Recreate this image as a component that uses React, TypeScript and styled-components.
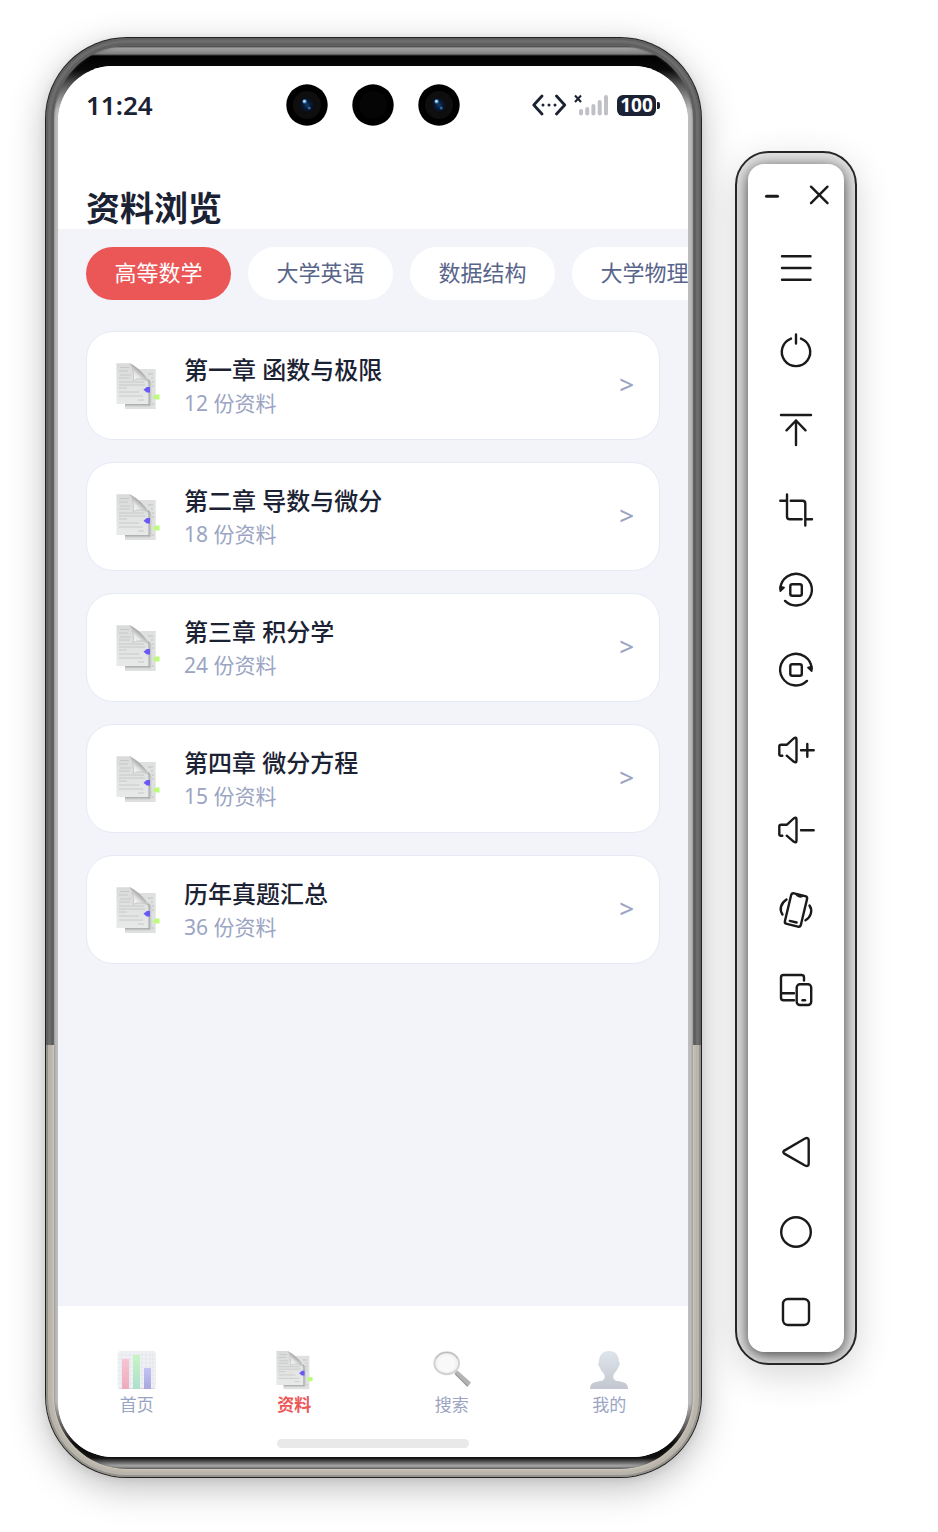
import React from "react";
import styled, { createGlobalStyle } from "styled-components";

const ink = "#1b2233";
const muted = "#9ba5c3";
const accent = "#eb5757";

const GlobalStyle = createGlobalStyle`
  *, *::before, *::after { box-sizing: border-box; }
  body {
    margin: 0;
    background: #fff;
    font-family: "Noto Sans", "Noto Sans CJK SC", sans-serif;
    color: ${ink};
  }
  button {
    font: inherit;
    color: inherit;
    border: 0;
    padding: 0;
    background: none;
    cursor: pointer;
  }
`;

const Desktop = styled.div`
  display: flex;
  align-items: flex-start;
  gap: 33px;
  min-height: 100vh;
  padding: 37px 81px 54px 45px;
`;

/* Phone shell */

const Shell = styled.div`
  flex: 1;
  min-width: 0;
  align-self: stretch;
  display: flex;
  padding: 1px;
  border-radius: 82px;
  background: #222;
  box-shadow: 0 10px 36px rgba(0, 0, 0, 0.26), 0 2px 8px rgba(0, 0, 0, 0.08);
`;

const Rail = styled.div`
  flex: 1;
  min-width: 0;
  display: flex;
  padding: 8px;
  border-radius: 81px;
  background: linear-gradient(#626262 0 70%, #cdc7ba 70%);
  box-shadow: inset 0 0 0 2px rgba(70, 70, 70, 0.3), inset 0 0 0 5px rgba(160, 160, 160, 0.2),
    inset 0 0 0 7px rgba(70, 70, 70, 0.1);
`;

const Bezel = styled.div`
  flex: 1;
  min-width: 0;
  display: flex;
  padding: 20px 5px 12px 4px;
  border-radius: 73px;
  background: linear-gradient(
    #3a3a3a 0,
    #a5a5a5 2px,
    #7d7d7d 8px,
    #000 10px,
    #0a0a0a 24px,
    #555 38px,
    #bdbdbd 64px,
    #bdbdbd calc(100% - 66px),
    #555 calc(100% - 40px),
    #0a0a0a calc(100% - 26px),
    #111 calc(100% - 11px),
    #aaa calc(100% - 3px),
    #666 100%
  );
  box-shadow: inset 0 0 3px rgba(70, 70, 70, 0.6);
`;

const Screen = styled.div`
  flex: 1;
  min-width: 0;
  display: flex;
  flex-direction: column;
  overflow: hidden;
  border-radius: 55px;
  background: #f3f4fa;
`;

const StatusBar = styled.div`
  display: grid;
  grid-template-columns: 1fr auto 1fr;
  align-items: center;
  height: 78px;
  padding: 0 28px;
  background: #fff;
`;

const Clock = styled.time`
  font-size: 26px;
  font-weight: 600;
  line-height: 34px;
`;

const Cameras = styled.div`
  display: flex;
  gap: 24px;
`;

const StatusIcons = styled.div`
  display: flex;
  justify-content: flex-end;
  align-items: center;
  gap: 9px;
`;

const Battery = styled.div`
  display: flex;
  align-items: center;
  gap: 1px;

  &::after {
    content: "";
    width: 3px;
    height: 7px;
    border-radius: 0 2px 2px 0;
    background: ${ink};
  }
`;

const BatteryLevel = styled.span`
  width: 39px;
  border-radius: 6px;
  background: ${ink};
  color: #fff;
  font-size: 19px;
  font-weight: 700;
  line-height: 21px;
  text-align: center;
`;

const Header = styled.header`
  padding: 44px 28px 1px;
  background: #fff;
`;

const Title = styled.h1`
  margin: 0;
  font-size: 34px;
  font-weight: 700;
  line-height: 40px;
`;

const Subjects = styled.div`
  display: flex;
  gap: 17px;
  padding: 18px 0 0 28px;
  overflow: hidden;
`;

const Chip = styled.button<{ $active?: boolean }>`
  flex: none;
  height: 53px;
  min-width: 145px;
  padding: 0 28px 4px;
  border-radius: 27px;
  background: ${(p) => (p.$active ? accent : "#fff")};
  color: ${(p) => (p.$active ? "#fff" : "#59648a")};
  font-size: 22px;
  line-height: 32px;
  white-space: nowrap;
`;

const Chapters = styled.ul`
  flex: 1;
  display: flex;
  flex-direction: column;
  gap: 22px;
  margin: 0;
  padding: 31px 28px;
  list-style: none;
`;

const Card = styled.button`
  display: flex;
  align-items: center;
  gap: 24px;
  width: 100%;
  height: 109px;
  padding: 0 25px 0 29px;
  border: 1px solid #e6eaf5;
  border-radius: 27px;
  background: #fff;
  text-align: left;
`;

const CardText = styled.span`
  flex: 1;
  display: flex;
  flex-direction: column;
`;

const CardTitle = styled.span`
  font-size: 24px;
  font-weight: 500;
  line-height: 34px;
`;

const CardCount = styled.span`
  color: ${muted};
  font-size: 21px;
  line-height: 32px;
`;

const Chevron = styled.span`
  padding-bottom: 3px;
  color: ${muted};
  font-size: 26px;
  font-weight: 500;
  line-height: 32px;
`;

const BottomBar = styled.div`
  display: flex;
  flex-direction: column;
  align-items: center;
  gap: 20px;
  padding: 44px 0 9px;
  background: #fff;
`;

const Tabs = styled.nav`
  align-self: stretch;
  display: grid;
  grid-template-columns: repeat(4, 1fr);
`;

const Tab = styled.button<{ $active?: boolean }>`
  display: flex;
  flex-direction: column;
  align-items: center;
  gap: 1px;
  color: ${(p) => (p.$active ? accent : muted)};
  font-size: 17px;
  font-weight: ${(p) => (p.$active ? 700 : 400)};
  line-height: 28px;
`;

const HomeIndicator = styled.div`
  width: 192px;
  height: 9px;
  border-radius: 5px;
  background: #e9e9e9;
`;

/* Emulator toolbar */

const ToolFrame = styled.aside`
  flex: none;
  margin-top: 114px;
  padding: 11px;
  border: 2px solid #262626;
  border-radius: 34px;
  background: #e4e4e4;
  overflow: hidden;
  box-shadow: 0 10px 36px rgba(0, 0, 0, 0.16);
`;

const ToolPanel = styled.div`
  width: 96px;
  border-radius: 16px;
  background: #fff;
  box-shadow: 0 3px 16px rgba(0, 0, 0, 0.75);
`;

const WindowRow = styled.div`
  display: grid;
  grid-template-columns: 1fr 1fr;
  height: 66px;
  padding-bottom: 4px;
`;

const ToolGroup = styled.div`
  display: flex;
  flex-direction: column;

  & + & {
    margin-top: 82px;
  }
`;

const ToolButton = styled.button`
  display: flex;
  align-items: center;
  justify-content: center;
  height: 80px;

  ${WindowRow} & {
    height: 62px;
  }
`;

const Glyph = styled.svg`
  display: block;
  width: 48px;
  height: 48px;
  fill: none;
  stroke: #1a1a1a;
  stroke-width: 2.4;
  stroke-linecap: round;
  stroke-linejoin: round;
`;

const Drawing = styled.svg`
  display: block;
  flex: none;
`;

function Camera({ lens }: { lens?: boolean }) {
  return (
    <Drawing width="42" height="42" viewBox="0 0 42 42" aria-hidden="true">
      <defs>
        <radialGradient id="lens">
          <stop offset="0" stopColor="#123e6e" />
          <stop offset="0.5" stopColor="#0a1830" />
          <stop offset="1" stopColor="#0b0c0f" />
        </radialGradient>
      </defs>
      <circle cx="21" cy="21" r="20.7" fill="#000" />
      <circle cx="21" cy="21" r="14" fill={lens ? "#0e0e0f" : "#050505"} />
      {lens && (
        <>
          <circle cx="21" cy="21" r="8" fill="url(#lens)" />
          <circle cx="18.6" cy="17.4" r="2.2" fill="#3d83bd" />
          <circle cx="18.4" cy="17.2" r="1.2" fill="#b5e0ff" />
          <circle cx="23.2" cy="24" r="1.6" fill="#2a69a5" />
        </>
      )}
    </Drawing>
  );
}

function DocIcon({ width, height }: { width: number; height: number }) {
  return (
    <Drawing width={width} height={height} viewBox="0 0 44 48" preserveAspectRatio="none" aria-hidden="true">
      <defs>
        <linearGradient id="page" x1="0" y1="0" x2="0" y2="1">
          <stop offset="0" stopColor="#d9dada" />
          <stop offset="1" stopColor="#e8e9e9" />
        </linearGradient>
        <linearGradient id="fold" gradientUnits="userSpaceOnUse" x1="16" y1="16" x2="23" y2="8">
          <stop offset="0" stopColor="#f6f6f6" />
          <stop offset="0.5" stopColor="#e6e6e6" />
          <stop offset="1" stopColor="#a9a9a9" />
        </linearGradient>
        <linearGradient id="castRight" x1="0" y1="0" x2="1" y2="0">
          <stop offset="0" stopColor="#9c9d9d" />
          <stop offset="1" stopColor="#dfe1e1" />
        </linearGradient>
        <linearGradient id="castBottom" x1="0" y1="0" x2="0" y2="1">
          <stop offset="0" stopColor="#a6a7a7" />
          <stop offset="1" stopColor="#dfe1e1" />
        </linearGradient>
      </defs>
      <rect x="9" y="7" width="30.7" height="40" fill="#dfe1e1" />
      <path d="M32 12h5M35 16h2M36 20h2M36 24h2M36 42h2" stroke="#b8b8b8" strokeWidth="0.8" />
      <path d="M9 42h25v3H9z" fill="url(#castBottom)" />
      <path d="M32 17l4 3v24l-4-1z" fill="url(#castRight)" />
      <path d="M.5 1.300H14Q17.500 9 17.500 18H29.500Q32.500 18 32.500 22V42H.5z" fill="url(#page)" />
      <path
        d="M4 5.500h9M3 9h9M4 13h11M3 16h11M3 20h25M3 23h26M3 26h8M3 30h20M3 34h24M22 38h6"
        stroke="#c1c1c1"
        strokeWidth="0.8"
      />
      <path d="M14 1.300C20 4.500 29 11.500 33 20 29 17 23 16 17.500 18.500 18 12 16.500 6 14 1.300z" fill="url(#fold)" />
      <path d="M14 1.300C17 6 17.800 12 17.300 18.500 22 16 28 16.500 32.500 19.500" fill="none" stroke="#c4c4c4" strokeWidth="0.9" />
      <path d="M27.500 27.800l3.300-2.800H34v5.500h-3.200z" fill="#6a58f5" />
      <path d="M36.500 35.200l3-2.700h4v5h-4z" fill="#bcfb7c" />
    </Drawing>
  );
}

function ChartIcon() {
  return (
    <Drawing width="40" height="40" viewBox="0 0 40 40" aria-hidden="true">
      <defs>
        <linearGradient id="red" x1="0" y1="0" x2="0" y2="1">
          <stop offset="0" stopColor="#f6c4d4" />
          <stop offset="1" stopColor="#eeabbc" />
        </linearGradient>
        <linearGradient id="green" x1="0" y1="0" x2="0" y2="1">
          <stop offset="0" stopColor="#c6f5c2" />
          <stop offset="1" stopColor="#aedfce" />
        </linearGradient>
        <linearGradient id="blue" x1="0" y1="0" x2="0" y2="1">
          <stop offset="0" stopColor="#c3c2f5" />
          <stop offset="1" stopColor="#a9a8dd" />
        </linearGradient>
      </defs>
      <rect x="0.500" y="1" width="38.500" height="38" rx="3" fill="#f0f1f4" />
      <path
        d="M5 1v37M9 1v37M13 1v37M17 1v37M21 1v37M25 1v37M29 1v37M33 1v37M36 1v37M1 5h38M1 9h38M1 13h38M1 17h38M1 21h38M1 25h38M1 29h38M1 33h38"
        stroke="#e1e4ea"
        strokeWidth="0.7"
      />
      <path d="M2 38.500h36" stroke="#d5d7dd" />
      <rect x="5" y="9" width="7" height="30" fill="url(#red)" />
      <rect x="16" y="5" width="7" height="34" fill="url(#green)" />
      <rect x="27" y="18" width="7" height="21" fill="url(#blue)" />
    </Drawing>
  );
}

function SearchIcon() {
  return (
    <Drawing width="40" height="40" viewBox="0 0 40 40" aria-hidden="true">
      <path d="M23.500 22l2-1.500L39 32.500 35.500 37 22.500 24z" fill="#b4b4b4" />
      <path d="M23 23.500L35.500 36" stroke="#9d9d9d" strokeWidth="1.200" />
      <ellipse cx="14.700" cy="13.300" rx="12.300" ry="11" fill="#f3f3f3" stroke="#d2d2d2" strokeWidth="2" />
      <path d="M4.500 8.500c4-8 17-8 20.500 0" fill="none" stroke="#b0b0b0" strokeWidth="0.8" />
      <ellipse cx="14.200" cy="14" rx="9" ry="8" fill="#f9f9f9" />
    </Drawing>
  );
}

function PersonIcon() {
  return (
    <Drawing width="40" height="40" viewBox="0 0 40 40" aria-hidden="true">
      <defs>
        <linearGradient id="person" x1="0" y1="0" x2="0" y2="1">
          <stop offset="0" stopColor="#dfe5ec" />
          <stop offset="1" stopColor="#c3c7cf" />
        </linearGradient>
      </defs>
      <path
        d="M20 1c7 0 10 5 10 10.500 1.500 2 .5 4.500-.8 6C28 21 26 22.500 25 24c-1.500 3-.5 6.500 3 7 6 .8 11 1.500 11 8H1c0-6.500 5-7.200 11-8 3.500-.5 4.500-4 3-7-1-1.500-3-3-4.200-6.500-1.300-1.500-2.300-4-.8-6C10 6 13 1 20 1z"
        fill="url(#person)"
      />
    </Drawing>
  );
}

const speaker = "M10.300 29.700H9Q7.300 29.700 7.300 28v-7.500Q7.300 18.700 9 18.700h6l6.600-6.200Q24.500 10.500 24.500 13.500v21Q24.500 37.500 21.600 35.600L14.700 29.700";

const tools: { label: string; art: React.ReactNode }[] = [
  { label: "菜单", art: <path d="M10 10.300h28.500M10 22h28.500M10 33.700h28.500" /> },
  { label: "电源", art: <path d="M24 8.500v9M29 12.600a14.200 14.200 0 1 1-10 0" /> },
  { label: "置顶", art: <path d="M9 9h30M24 14.500V39M14.500 24.300L24 14.500l9.500 9.800" /> },
  {
    label: "截屏",
    art: <path d="M8.300 14.700H15M15 8.500V30.500Q15 33.300 17.800 33.300H29.700M18.700 14.700H30.500Q33.300 14.700 33.300 17.500V39.500M33.300 33.300h6.700" />,
  },
  {
    label: "向左旋转",
    art: (
      <>
        <path d="M8.300 22.500A15.800 15.800 0 1 1 13 34.900" />
        <path d="M8.300 20.500v4.500l3.700-3.500z" fill="#1a1a1a" strokeWidth="1.800" />
        <rect x="18.300" y="18.300" width="11.500" height="11.500" rx="2" />
      </>
    ),
  },
  {
    label: "向右旋转",
    art: (
      <>
        <path d="M39.700 22.500A15.800 15.800 0 1 0 35 34.900" />
        <path d="M39.700 20.500v4.500l-3.700-3.500z" fill="#1a1a1a" strokeWidth="1.800" />
        <rect x="18.300" y="18.300" width="11.500" height="11.500" rx="2" />
      </>
    ),
  },
  { label: "增大音量", art: <path d={`${speaker}M29 24.300h12.700M35.300 18v12.700`} /> },
  { label: "减小音量", art: <path d={`${speaker}M29 24.300h12.700`} /> },
  {
    label: "摇一摇",
    art: (
      <>
        <g transform="rotate(13.500 24 24)">
          <rect x="15.800" y="8.300" width="16.400" height="31.400" rx="2.500" />
          <path d="M21 8.800q3 2.400 6 0M20.500 36h7" />
        </g>
        <path d="M14.500 13.500C8.500 17.500 7.200 23.500 10.500 28.500M37.500 19.500C41 24.500 39 31 33.500 34.300" />
      </>
    ),
  },
  {
    label: "多设备",
    art: (
      <>
        <path d="M32 14.500V11.500Q32 9 29.500 9h-18Q9 9 9 11.500v20Q9 34.300 11.500 34.300H22M9 27.300h13" />
        <rect x="24.700" y="18.300" width="14.500" height="20.700" rx="3.200" />
        <path d="M30.500 34.200h2.500" />
      </>
    ),
  },
];

const navKeys: typeof tools = [
  { label: "返回", art: <path d="M12.300 22.600L33 10.500Q36.700 9 36.700 12.500v23Q36.700 39 33 37.500L12.300 25.600Q10.300 24 12.300 22.600z" /> },
  { label: "主屏幕", art: <circle cx="24" cy="24" r="14.800" /> },
  { label: "最近任务", art: <rect x="11" y="11" width="26" height="26" rx="5" /> },
];

const subjects = ["高等数学", "大学英语", "数据结构", "大学物理"];

const chapters = [
  { title: "第一章 函数与极限", count: 12 },
  { title: "第二章 导数与微分", count: 18 },
  { title: "第三章 积分学", count: 24 },
  { title: "第四章 微分方程", count: 15 },
  { title: "历年真题汇总", count: 36 },
];

const tabs = [
  { label: "首页", icon: <ChartIcon /> },
  { label: "资料", icon: <DocIcon width={37} height={40} />, active: true },
  { label: "搜索", icon: <SearchIcon /> },
  { label: "我的", icon: <PersonIcon /> },
];

function StatusDrawings() {
  return (
    <Drawing width="76" height="22" viewBox="0 0 76 22" aria-hidden="true">
      <path
        d="M10 2L1.800 11 10 20M24.500 2l8.200 9-8.200 9"
        fill="none"
        stroke={ink}
        strokeWidth="2.800"
        strokeLinecap="round"
        strokeLinejoin="round"
      />
      <circle cx="11" cy="11" r="1.500" fill={ink} />
      <circle cx="17" cy="11" r="1.500" fill={ink} />
      <circle cx="23" cy="11" r="1.500" fill={ink} />
      <path d="M43 1.500l6 6.500M49 1.500L43 8" stroke={ink} strokeWidth="2" />
      <g fill="#bfc1c6">
        <rect x="47" y="15" width="4" height="6.500" rx="2" />
        <rect x="53.200" y="13" width="4" height="8.500" rx="2" />
        <rect x="59.400" y="10" width="4" height="11.500" rx="2" />
        <rect x="65.700" y="6" width="4" height="15.500" rx="2" />
        <rect x="72" y="1" width="4" height="20.500" rx="2" />
      </g>
    </Drawing>
  );
}

function Tool({ label, art }: { label: string; art: React.ReactNode }) {
  return (
    <ToolButton aria-label={label}>
      <Glyph viewBox="0 0 48 48">{art}</Glyph>
    </ToolButton>
  );
}

export default function App() {
  return (
    <>
      <GlobalStyle />
      <Desktop>
        <Shell>
          <Rail>
            <Bezel>
              <Screen>
                <StatusBar>
                  <Clock>11:24</Clock>
                  <Cameras>
                    <Camera lens />
                    <Camera />
                    <Camera lens />
                  </Cameras>
                  <StatusIcons>
                    <StatusDrawings />
                    <Battery>
                      <BatteryLevel>100</BatteryLevel>
                    </Battery>
                  </StatusIcons>
                </StatusBar>
                <Header>
                  <Title>资料浏览</Title>
                </Header>
                <Subjects>
                  {subjects.map((name, i) => (
                    <Chip key={name} $active={i === 0}>
                      {name}
                    </Chip>
                  ))}
                </Subjects>
                <Chapters>
                  {chapters.map((c) => (
                    <li key={c.title}>
                      <Card>
                        <DocIcon width={44} height={48} />
                        <CardText>
                          <CardTitle>{c.title}</CardTitle>
                          <CardCount>{c.count} 份资料</CardCount>
                        </CardText>
                        <Chevron>&gt;</Chevron>
                      </Card>
                    </li>
                  ))}
                </Chapters>
                <BottomBar>
                  <Tabs>
                    {tabs.map((t) => (
                      <Tab key={t.label} $active={t.active}>
                        {t.icon}
                        {t.label}
                      </Tab>
                    ))}
                  </Tabs>
                  <HomeIndicator />
                </BottomBar>
              </Screen>
            </Bezel>
          </Rail>
        </Shell>
        <ToolFrame>
          <ToolPanel>
            <WindowRow>
              <Tool label="最小化" art={<path d="M18.500 25.300h11" strokeWidth="3" />} />
              <Tool label="关闭" art={<path d="M15 15.700l16.500 16.500M31.500 15.700L15 32.200" />} />
            </WindowRow>
            <ToolGroup>
              {tools.map((t) => (
                <Tool key={t.label} {...t} />
              ))}
            </ToolGroup>
            <ToolGroup>
              {navKeys.map((t) => (
                <Tool key={t.label} {...t} />
              ))}
            </ToolGroup>
          </ToolPanel>
        </ToolFrame>
      </Desktop>
    </>
  );
}
